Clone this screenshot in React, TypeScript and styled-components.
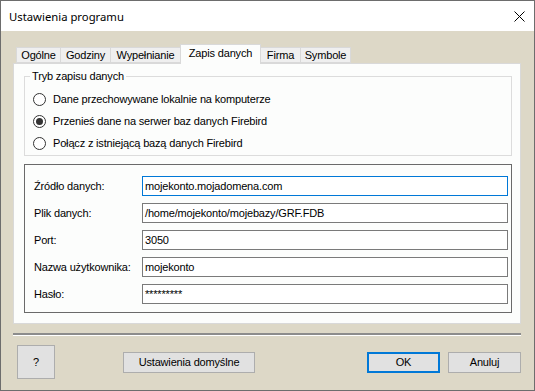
import React from "react";
import styled, { createGlobalStyle } from "styled-components";

const GlobalStyle = createGlobalStyle`
  html, body { margin: 0; padding: 0; background: #ffffff; }
  body {
    font-family: "Liberation Sans", Arial, sans-serif;
    font-size: 11px;
    letter-spacing: -0.17px;
    color: #000;
  }
  * { box-sizing: border-box; }
`;

const Window = styled.div`
  width: 535px;
  height: 391px;
  border: 1px solid #6d6d6d;
  background: #ddd8c7;
  display: flex;
  flex-direction: column;
`;

const TitleBar = styled.div`
  flex: none;
  height: 30px;
  background: #ffffff;
  display: flex;
  align-items: center;
  justify-content: space-between;
  padding: 0 9px 0 8px;
`;

const Title = styled.span`
  font-family: "Noto Sans", "Segoe UI", sans-serif;
  font-size: 11.3px;
  letter-spacing: 0;
  color: #000;
`;

const CloseIcon = styled.svg`
  display: block;
  width: 11px;
  height: 11px;
`;

const Body = styled.div`
  flex: 1;
  display: flex;
  flex-direction: column;
  padding: 13px 13px 0 12px;
`;

const TabStrip = styled.div`
  height: 19px;
  display: flex;
  align-items: flex-end;
  padding-left: 4px;
  position: relative;
  z-index: 1;
`;

const Tab = styled.div<{ $active?: boolean; $w: number }>`
  width: ${(p) => p.$w}px;
  height: ${(p) => (p.$active ? 20 : 16)}px;
  margin: ${(p) => (p.$active ? "0 0 -1px -1px" : "0 0 0 -1px")};
  padding-bottom: ${(p) => (p.$active ? 3 : 0)}px;
  border: 1px solid #d9d9d9;
  border-bottom: ${(p) => (p.$active ? "none" : "1px solid #d9d9d9")};
  background: ${(p) => (p.$active ? "#fcfdfc" : "#efefef")};
  position: relative;
  z-index: ${(p) => (p.$active ? 2 : 0)};
  display: flex;
  align-items: center;
  justify-content: center;
  white-space: nowrap;
  font-size: 11px;
`;

const Panel = styled.div`
  height: 261px;
  border: 1px solid #d9d9d9;
  background: #fcfdfc;
  padding: 5px 8px 9px 10px;
  display: flex;
  flex-direction: column;
`;

const GroupBox = styled.fieldset`
  margin: 0;
  min-width: 0;
  padding: 5px 0 1px 8px;
  border: 1px solid #dcdcdc;
`;

const Legend = styled.legend`
  padding: 0 2px;
  margin-left: -3px;
  line-height: 14px;
  font-size: 11px;
`;

const RadioRow = styled.label`
  height: 22px;
  display: flex;
  align-items: center;
  gap: 7px;
`;

const RadioCircle = styled.span<{ $checked?: boolean }>`
  width: 13px;
  height: 13px;
  border-radius: 50%;
  border: 1px solid #333333;
  background: #ffffff;
  display: flex;
  align-items: center;
  justify-content: center;
  &::after {
    content: "";
    width: 7px;
    height: 7px;
    border-radius: 50%;
    background: ${(p) => (p.$checked ? "#333333" : "transparent")};
  }
`;

const FormBox = styled.div`
  margin-top: 8px;
  border: 1px solid #6a6a6a;
  padding: 11px 3px 8px 9px;
  display: grid;
  grid-template-columns: 108px 1fr;
  row-gap: 7px;
  align-items: center;
`;

const FieldLabel = styled.span`
  font-size: 11px;
  white-space: nowrap;
`;

const Input = styled.div<{ $focused?: boolean }>`
  height: 20px;
  border: 1px solid ${(p) => (p.$focused ? "#0078d7" : "#7a7a7a")};
  background: #ffffff;
  padding-left: 2px;
  display: flex;
  align-items: center;
  font-size: 11px;
  white-space: nowrap;
`;

const Separator = styled.div`
  margin-top: 9px;
  height: 3px;
  border-top: 2px solid #8c8c8c;
  border-bottom: 1px solid #ffffff;
`;

const ButtonRow = styled.div`
  margin-top: 9px;
  display: flex;
  align-items: center;
  padding-left: 4px;
`;

const Button = styled.div<{ $w: number; $h?: number; $default?: boolean }>`
  width: ${(p) => p.$w}px;
  height: ${(p) => p.$h ?? 21}px;
  background: #e1e1e1;
  border: ${(p) => (p.$default ? "2px solid #0078d7" : "1px solid #adadad")};
  display: flex;
  align-items: center;
  justify-content: center;
  font-size: 11px;
  white-space: nowrap;
`;

const Spacer = styled.div<{ $w?: number }>`
  ${(p) => (p.$w ? `width: ${p.$w}px;` : "flex: 1;")}
`;

const tabs = [
  { label: "Ogólne", w: 45 },
  { label: "Godziny", w: 51 },
  { label: "Wypełnianie", w: 71 },
  { label: "Zapis danych", w: 81, active: true },
  { label: "Firma", w: 41 },
  { label: "Symbole", w: 51 },
];

const radios = [
  { label: "Dane przechowywane lokalnie na komputerze" },
  { label: "Przenieś dane na serwer baz danych Firebird", checked: true },
  { label: "Połącz z istniejącą bazą danych Firebird" },
];

const fields = [
  { label: "Źródło danych:", value: "mojekonto.mojadomena.com", focused: true },
  { label: "Plik danych:", value: "/home/mojekonto/mojebazy/GRF.FDB" },
  { label: "Port:", value: "3050" },
  { label: "Nazwa użytkownika:", value: "mojekonto" },
  { label: "Hasło:", value: "*********" },
];

export default function App() {
  return (
    <>
      <GlobalStyle />
      <Window>
        <TitleBar>
          <Title>Ustawienia programu</Title>
          <CloseIcon viewBox="0 0 11 11">
            <path d="M0.5 0.5 L10.5 10.5 M10.5 0.5 L0.5 10.5" stroke="#000" strokeWidth="1" />
          </CloseIcon>
        </TitleBar>
        <Body>
          <TabStrip>
            {tabs.map((t) => (
              <Tab key={t.label} $active={t.active} $w={t.w}>
                {t.label}
              </Tab>
            ))}
          </TabStrip>
          <Panel>
            <GroupBox>
              <Legend>Tryb zapisu danych</Legend>
              {radios.map((r) => (
                <RadioRow key={r.label}>
                  <RadioCircle $checked={r.checked} />
                  {r.label}
                </RadioRow>
              ))}
            </GroupBox>
            <FormBox>
              {fields.map((f) => (
                <React.Fragment key={f.label}>
                  <FieldLabel>{f.label}</FieldLabel>
                  <Input $focused={f.focused}>{f.value}</Input>
                </React.Fragment>
              ))}
            </FormBox>
          </Panel>
          <Separator />
          <ButtonRow>
            <Button $w={38} $h={34}>?</Button>
            <Spacer $w={68} />
            <Button $w={132}>Ustawienia domyślne</Button>
            <Spacer />
            <Button $w={73} $default>OK</Button>
            <Spacer $w={8} />
            <Button $w={73}>Anuluj</Button>
          </ButtonRow>
        </Body>
      </Window>
    </>
  );
}
